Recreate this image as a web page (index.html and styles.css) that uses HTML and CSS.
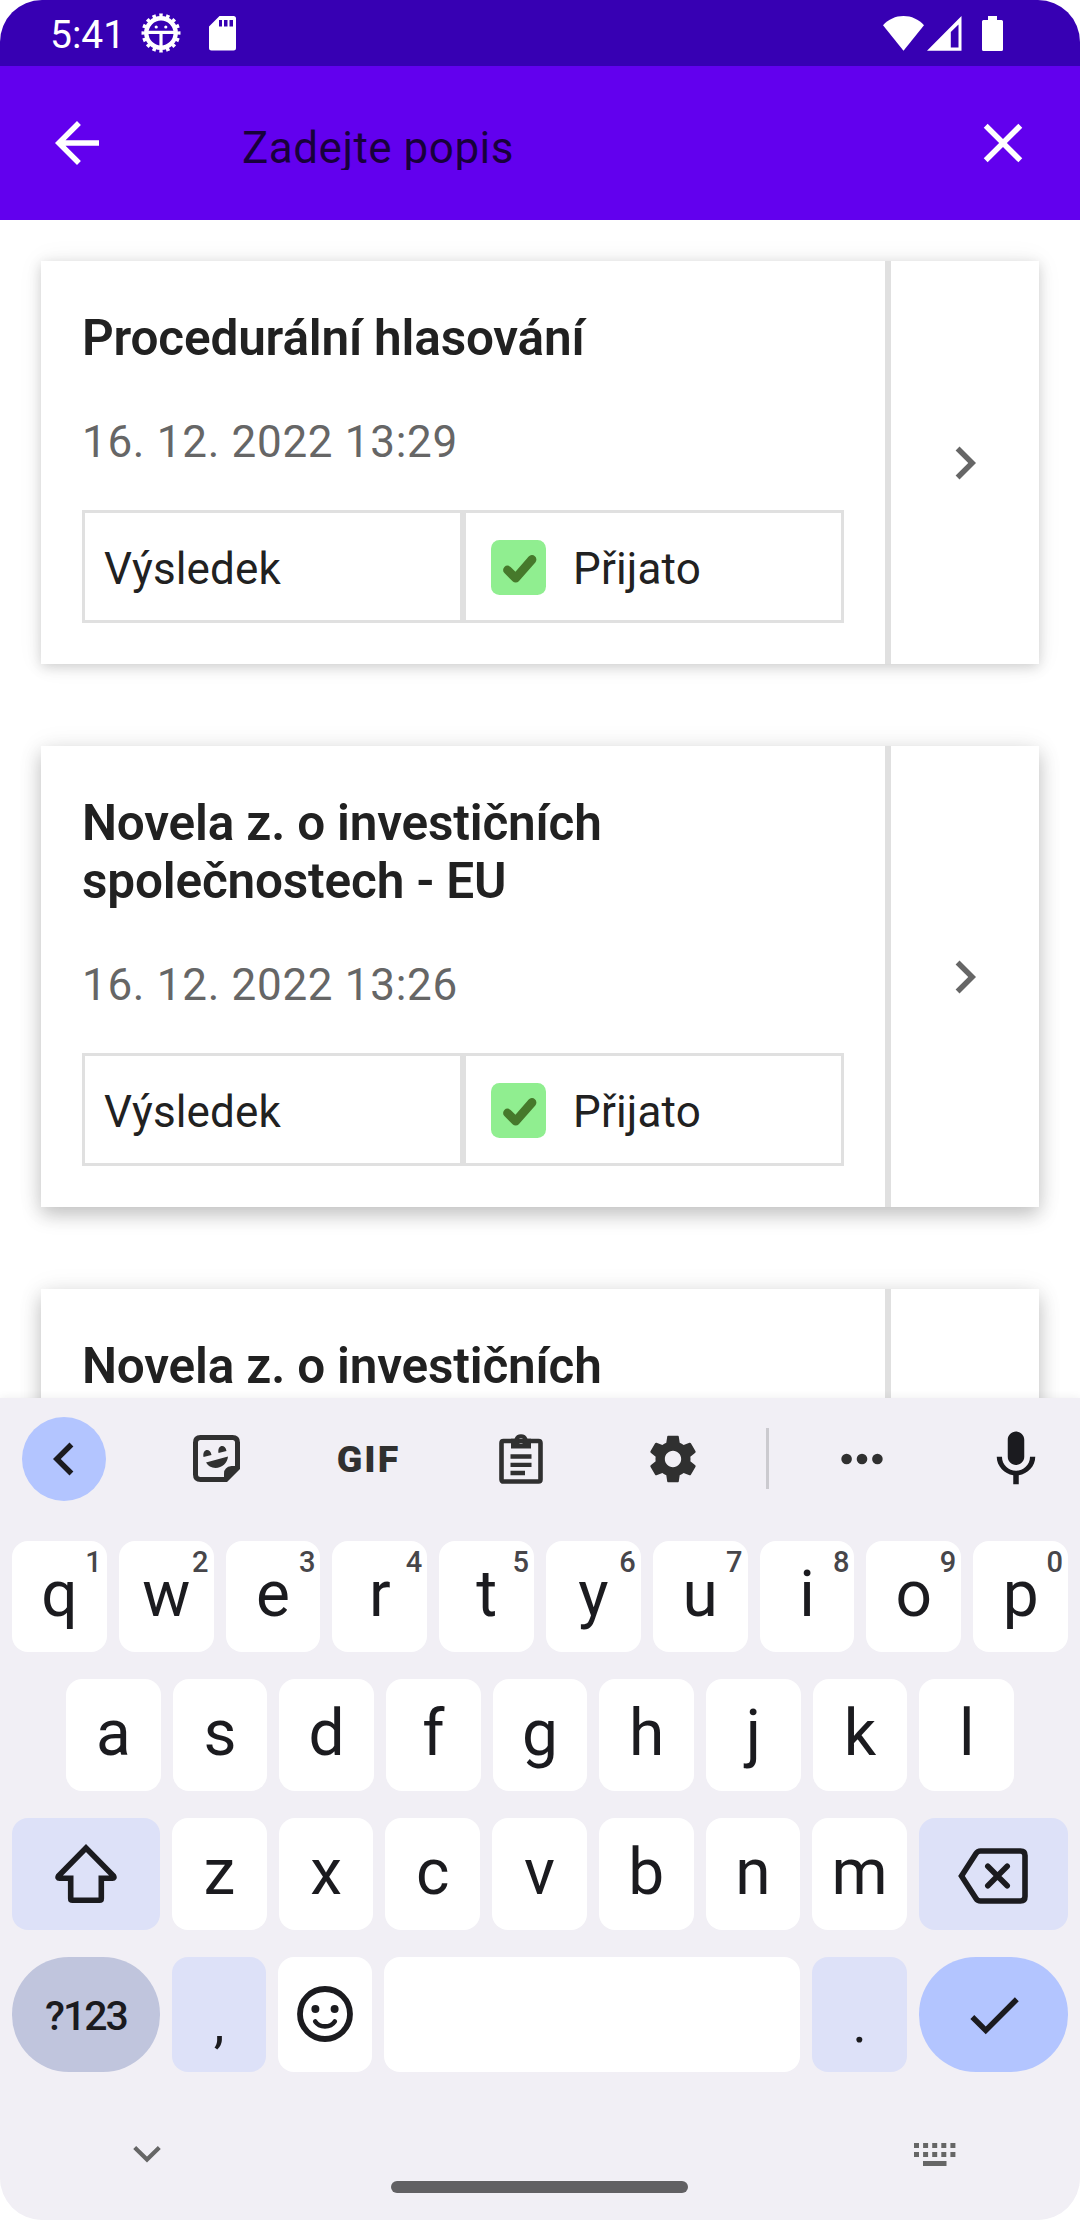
FILE: index.html
```html
<!DOCTYPE html>
<html lang="cs">
<head>
<meta charset="utf-8">
<title>Hlasování</title>
<link rel="stylesheet" href="styles.css">
</head>
<body>
<div class="screen">
  <header class="status">
    <span class="clock">5:41</span>
    <svg class="st-debug" width="40" height="40" viewBox="-20 -20 40 40">
      <circle r="16.500" fill="none" stroke="#fff" stroke-width="6" pathLength="32" stroke-dasharray="1 1" stroke-dashoffset=".5"/>
      <circle r="14.700" fill="none" stroke="#fff" stroke-width="4.400"/>
      <path d="M-13-.6H13M0 0V14" stroke="#fff" stroke-width="3.2"/>
      <circle cx="-4.8" cy="-6" r="1.6" fill="#fff"/><circle cx="4.8" cy="-6" r="1.6" fill="#fff"/>
    </svg>
    <svg class="st-sd" width="27" height="35" viewBox="0 0 27 35">
      <path fill="#fff" fill-rule="evenodd" d="M10.500 0H24.500A2.500 2.500 0 0 1 27 2.500V32A2.500 2.500 0 0 1 24.500 34.500H2.500A2.500 2.500 0 0 1 0 32V10.500ZM10 4V10.500H13V4ZM15 4V10.500H18.500V4ZM20.500 4V10.500H24V4Z"/>
    </svg>
    <span class="st-gap"></span>
    <svg class="st-wifi" width="41" height="35" viewBox="0 0 41 35">
      <path fill="#fff" d="M20.500 34.700L0 9.200C5.500 3.300 12.500 0 20.500 0S35.500 3.300 41 9.200Z"/>
    </svg>
    <svg class="st-cell" width="35" height="35" viewBox="0 0 35 35">
      <path fill="#fff" fill-rule="evenodd" d="M34.500 0V34.700H0ZM31.500 8.500L23.800 16V31.500H31.500Z"/>
    </svg>
    <svg class="st-batt" width="21" height="35" viewBox="0 0 21 35">
      <path fill="#fff" d="M6 0H15V4H19.500Q21 4 21 5.500V33.500Q21 35 19.500 35H1.500Q0 35 0 33.500V5.500Q0 4 1.500 4H6Z"/>
    </svg>
  </header>

  <div class="appbar">
    <svg width="66" height="66" viewBox="0 0 24 24"><path fill="#fff" d="M20 11H7.830l5.590-5.590L12 4l-8 8 8 8 1.410-1.410L7.830 13H20z"/></svg>
    <div class="search">Zadejte popis</div>
    <svg width="66" height="66" viewBox="0 0 24 24"><path fill="#fff" d="M19 6.410L17.590 5 12 10.590 6.410 5 5 6.410 10.590 12 5 17.590 6.410 19 12 13.410 17.590 19 19 17.590 13.410 12z"/></svg>
  </div>

  <main class="list">
    <article class="card">
      <div class="body">
        <h2>Procedurální hlasování</h2>
        <p class="date">16. 12. 2022 13:29</p>
        <div class="result">
          <div class="cell">Výsledek</div>
          <div class="cell value"><svg width="55" height="55" viewBox="0 0 55 55"><rect width="55" height="55" rx="8.500" fill="#90ee90"/><path d="M16.500 30L24.700 38.200L41 19.500" fill="none" stroke="#46792b" stroke-width="8.800" stroke-linecap="round" stroke-linejoin="round"/></svg>Přijato</div>
        </div>
      </div>
      <div class="open"><svg width="66" height="66" viewBox="0 0 24 24"><path fill="#666" d="M10 6L8.590 7.410 13.170 12l-4.580 4.590L10 18l6-6z"/></svg></div>
    </article>
    <article class="card low">
      <div class="body">
        <h2>Novela z. o investičních společnostech - EU</h2>
        <p class="date">16. 12. 2022 13:26</p>
        <div class="result">
          <div class="cell">Výsledek</div>
          <div class="cell value"><svg width="55" height="55" viewBox="0 0 55 55"><rect width="55" height="55" rx="8.500" fill="#90ee90"/><path d="M16.500 30L24.700 38.200L41 19.500" fill="none" stroke="#46792b" stroke-width="8.800" stroke-linecap="round" stroke-linejoin="round"/></svg>Přijato</div>
        </div>
      </div>
      <div class="open"><svg width="66" height="66" viewBox="0 0 24 24"><path fill="#666" d="M10 6L8.590 7.410 13.170 12l-4.580 4.590L10 18l6-6z"/></svg></div>
    </article>
    <article class="card low">
      <div class="body">
        <h2>Novela z. o investičních</h2>
      </div>
      <div class="open"></div>
    </article>
  </main>

  <section class="keyboard">
    <div class="tools">
      <span class="back"><svg width="66" height="66" viewBox="0 0 24 24"><path fill="#1b1b1f" d="M15.410 7.410L14 6l-6 6 6 6 1.410-1.410L10.830 12z"/></svg></span>
      <svg width="47" height="47" viewBox="0 0 47 47">
        <path d="M7.500 2.500H39.500Q44.500 2.500 44.500 7.500V33L33 44.500H7.500Q2.500 44.500 2.500 39.500V7.500Q2.500 2.500 7.500 2.500Z" fill="none" stroke="#303030" stroke-width="5"/>
        <path d="M47 31H38.500Q31 32 31 38.500V47H33L47 33Z" fill="#303030"/>
        <path d="M13 27.500L35 21.500C34.500 28 29 33 22.500 33Q16 32.500 13 27.500ZM10.500 22C9 13.500 17.500 12.500 18.500 20ZM25.500 18C24 9.500 32.500 8.500 33.500 16Z" fill="#303030"/>
      </svg>
      <span class="gif">GIF</span>
      <svg width="44" height="52" viewBox="0 0 44 52">
        <path d="M4.500 8H39.500Q41.500 8 41.500 10V46.500Q41.500 48.500 39.500 48.500H4.500Q2.500 48.500 2.500 46.500V10Q2.500 8 4.500 8Z" fill="none" stroke="#303030" stroke-width="4.600"/>
        <path fill="#303030" fill-rule="evenodd" d="M12 15.500V5.700H15.500A7 7 0 0 1 28.500 5.700H32V15.500ZM22 5.300A2.700 2.700 0 1 0 22 10.700A2.700 2.700 0 1 0 22 5.300Z"/>
        <path d="M11.500 23.500H32.500M11.500 31.800H32.500M11.500 40H26" stroke="#303030" stroke-width="4.300"/>
      </svg>
      <svg width="56" height="56" viewBox="0 0 24 24"><path fill="#303030" d="M19.430 12.980c.04-.32.07-.64.07-.98s-.03-.66-.07-.98l2.110-1.650c.19-.15.24-.42.12-.64l-2-3.460c-.12-.22-.39-.3-.61-.22l-2.490 1c-.52-.4-1.080-.73-1.690-.98l-.38-2.650C14.460 2.180 14.250 2 14 2h-4c-.25 0-.46.18-.49.42l-.38 2.650c-.61.25-1.170.59-1.690.98l-2.490-1c-.23-.09-.49 0-.61.22l-2 3.460c-.13.22-.07.49.12.64l2.110 1.650c-.04.32-.07.65-.07.98s.03.66.07.98l-2.110 1.650c-.19.15-.24.42-.12.64l2 3.460c.12.22.39.3.61.22l2.490-1c.52.4 1.080.73 1.690.98l.38 2.650c.03.24.24.42.49.42h4c.25 0 .46-.18.49-.42l.38-2.650c.61-.25 1.170-.59 1.690-.98l2.490 1c.23.09.49 0 .61-.22l2-3.460c.12-.22.07-.49-.12-.64zM12 15.500c-1.930 0-3.500-1.570-3.500-3.500s1.570-3.500 3.500-3.500 3.500 1.570 3.500 3.500-1.570 3.500-3.500 3.500z"/></svg>
      <span class="rule"></span>
      <svg width="42" height="12" viewBox="0 0 42 12"><g fill="#303030"><circle cx="5.600" cy="6" r="5.300"/><circle cx="21" cy="6" r="5.300"/><circle cx="36.400" cy="6" r="5.300"/></g></svg>
      <svg class="mic" width="66" height="66" viewBox="0 0 24 24"><path fill="#1b1b1f" d="M12 14.200c1.660 0 3-1.340 3-3V5c0-1.660-1.340-3-3-3S9 3.340 9 5v6.200c0 1.660 1.340 3 3 3zM17.100 11.200c0 3-2.440 5.100-5.100 5.100s-5.100-2.100-5.100-5.100H5c0 3.410 2.720 6.230 6 6.720V21.200h2v-3.280c3.280-.48 6-3.300 6-6.720z"/></svg>
    </div>

    <div class="keys r1">
      <div class="key">q<i>1</i></div><div class="key">w<i>2</i></div><div class="key">e<i>3</i></div><div class="key">r<i>4</i></div><div class="key">t<i>5</i></div><div class="key">y<i>6</i></div><div class="key">u<i>7</i></div><div class="key">i<i>8</i></div><div class="key">o<i>9</i></div><div class="key">p<i>0</i></div>
    </div>
    <div class="keys r2">
      <div class="key">a</div><div class="key">s</div><div class="key">d</div><div class="key">f</div><div class="key">g</div><div class="key">h</div><div class="key">j</div><div class="key">k</div><div class="key">l</div>
    </div>
    <div class="keys r3">
      <div class="key tint icon"><svg width="62" height="60" viewBox="0 0 62 60"><path d="M31 4L3.500 32Q2.200 34.300 4.500 34.300H15.700V54.500Q15.700 56.300 17.500 56.300H44.500Q46.300 56.300 46.300 54.500V34.300H57.500Q59.800 34.300 58.500 32Z" fill="none" stroke="#1b1b1f" stroke-width="5.600"/></svg></div>
      <div class="key">z</div><div class="key">x</div><div class="key">c</div><div class="key">v</div><div class="key">b</div><div class="key">n</div><div class="key">m</div>
      <div class="key tint icon"><svg class="del" width="70" height="56" viewBox="0 0 70 56"><path d="M3.500 28L18 5.500Q19.600 3 22.500 3H62.500Q67 3 67 7.500V48.500Q67 53 62.500 53H22.500Q19.600 53 18 50.500ZM29.800 18.200L49.200 37.800M49.200 18.200L29.800 37.800" fill="none" stroke="#1b1b1f" stroke-width="5.600" stroke-linecap="round"/></svg></div>
    </div>
    <div class="keys r4">
      <div class="key mode icon">?123</div>
      <div class="key tint punct">,</div>
      <div class="key icon"><svg class="smile" width="56" height="56" viewBox="-28 -28 56 56"><circle r="25" fill="none" stroke="#1b1b1f" stroke-width="5.800"/><circle cx="-9.600" cy="-5" r="4" fill="#1b1b1f"/><circle cx="9.600" cy="-5" r="4" fill="#1b1b1f"/><path d="M-9.800 7.500Q-6.500 12.400 0 12.400T9.800 7.500" fill="none" stroke="#1b1b1f" stroke-width="4.600" stroke-linecap="round"/></svg></div>
      <div class="key"></div>
      <div class="key tint punct">.</div>
      <div class="key enter icon"><svg width="66" height="66" viewBox="0 0 24 24"><path fill="#1b1b1f" d="M9 16.170L4.830 12l-1.420 1.410L9 19 21 7l-1.410-1.410z"/></svg></div>
    </div>

    <div class="nav">
      <svg class="hide" width="28" height="17" viewBox="0 0 28 17"><path d="M1.700 1.600L14 13.600L26.300 1.600" fill="none" stroke="#666" stroke-width="4.200"/></svg>
      <span class="home"></span>
      <svg class="switch" width="42" height="23" viewBox="0 0 42 23"><path d="M0 2.500H42M0 11.500H42" stroke="#666" stroke-width="5" stroke-dasharray="5 4.100"/><path d="M9 20.500H32.500" stroke="#666" stroke-width="5"/></svg>
    </div>
  </section>
</div>
</body>
</html>
```
FILE: styles.css
```css
* { box-sizing: border-box; }
body { margin: 0; background: #fff; font-family: Roboto, sans-serif; }
svg { display: block; flex: none; }
.screen {
  width: 1080px; height: 2220px; display: flex; flex-direction: column;
  overflow: hidden; border-radius: 42px; background: #fff;
}

.status { height: 66px; flex: none; background: #3700b3; display: flex; align-items: center; padding: 0 77px 0 50px; color: #fff; }
.clock { font-size: 39px; line-height: 46px; width: 91px; margin-top: 3px; }
.st-sd { margin-left: 28px; }
.st-gap { flex: 1; }
.st-cell { margin-left: 3px; }
.st-batt { margin-left: 20px; }

.appbar { height: 154px; flex: none; background: #6200ee; display: flex; align-items: center; padding: 0 44px; }
.search {
  flex: 1; margin-left: 132px; height: 52px; margin-top: 2px; overflow: hidden;
  font-size: 44px; line-height: 60px; letter-spacing: .5px; color: rgba(0, 0, 0, .75);
}

.list { flex: 1; min-height: 0; overflow: hidden; padding: 41px; display: flex; flex-direction: column; gap: 82px; }
.card { display: flex; flex: none; background: #fff; box-shadow: 0 3px 12px rgba(0, 0, 0, .17), 0 0 26px rgba(0, 0, 0, .06); }
.card.low { box-shadow: 0 8px 18px rgba(0, 0, 0, .21), 0 1px 26px rgba(0, 0, 0, .07); }
.body { width: 844px; padding: 48px 41px 41px; }
h2 { margin: 0; font-size: 49.5px; line-height: 58px; font-weight: 600; letter-spacing: -.18px; color: #212121; width: 640px; }
.date { margin: 49px 0 0; font-size: 44px; line-height: 52px; letter-spacing: .7px; color: #666; }
.result { margin-top: 42px; display: flex; }
.cell { width: 381px; height: 113px; border: 3px solid #e0e0e0; padding-left: 19px; display: flex; align-items: center; font-size: 44px; letter-spacing: .15px; color: #212121; padding-top: 5px; }
.value { padding-left: 25px; gap: 27px; }
.value svg { margin-top: -4px; }
.open { flex: 1; border-left: 6px solid #e0e0e0; display: flex; align-items: center; justify-content: center; }

.keyboard { flex: none; height: 822px; background: #f1eff5; box-shadow: 0 -1px 8px rgba(0, 0, 0, .06); position: relative; }
.tools { height: 121px; margin-bottom: 22px; padding-left: 22px; display: grid; grid-template-columns: 118.5px repeat(4, 152px) 38px 150px 1fr; align-items: center; justify-items: center; }
.back { width: 84px; height: 84px; border-radius: 50%; background: #b3c5ff; display: grid; place-items: center; justify-self: start; }
.gif { font-size: 37.5px; line-height: 44px; font-weight: 900; letter-spacing: 2px; color: #303030; }
.rule { width: 3px; height: 61px; background: #cbcacf; }
.mic { margin-left: 16px; }

.keys { display: grid; gap: 12px; height: 112px; margin: 0 12px 27px; }
.r1 { grid-template-columns: repeat(10, 1fr); height: 111px; }
.r2 { grid-template-columns: repeat(9, 1fr); margin: 0 66px 27px; }
.r3 { grid-template-columns: 148px repeat(7, 1fr) 149px; }
.r4 { grid-template-columns: 148px 94px 94px 1fr 95px 149px; height: 115px; margin-bottom: 0; }
.key {
  background: #fff; border-radius: 16px; position: relative; display: flex; align-items: center; justify-content: center;
  font-size: 64px; line-height: 75px; padding-bottom: 4px; color: #1b1b1f;
}
.key i { position: absolute; top: 4px; right: 5px; font-style: normal; font-weight: 500; font-size: 29px; line-height: 34px; color: #47464a; }
.icon { padding: 0; }
.tint { background: #dde1f8; }
.mode { background: #c0c5dd; border-radius: 57px; font-size: 41px; font-weight: 500; letter-spacing: -2px; padding-top: 3px; }
.punct { font-size: 54px; padding: 18px 0 0; }
.enter { background: #b3c5ff; border-radius: 57px; }
.del { margin-left: -2px; margin-top: 4px; }
.smile { margin-top: -1px; }

.nav { height: 148px; display: grid; grid-template-columns: 391px 297px 1fr; align-items: start; }
.hide { margin: 74px 0 0 133px; }
.home { height: 12px; border-radius: 6px; background: #616063; margin-top: 109px; }
.switch { margin: 71px 0 0 226px; }
```
